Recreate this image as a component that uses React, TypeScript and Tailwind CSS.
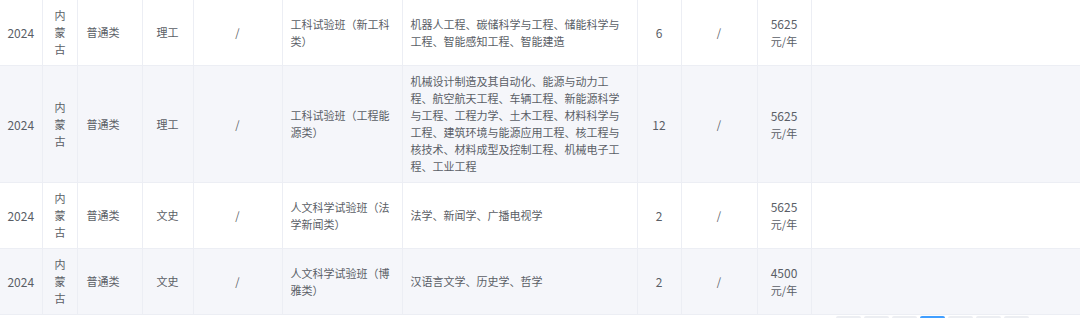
import React from "react";

type Row = {
  year: string;
  province: string;
  kind: string;
  subject: string;
  req: string;
  cls: string;
  majors: string;
  count: string;
  note: string;
  fee: string;
};

const rows: Row[] = [
  {
    year: "2024",
    province: "内蒙古",
    kind: "普通类",
    subject: "理工",
    req: "/",
    cls: "工科试验班（新工科类）",
    majors: "机器人工程、碳储科学与工程、储能科学与工程、智能感知工程、智能建造",
    count: "6",
    note: "/",
    fee: "5625",
  },
  {
    year: "2024",
    province: "内蒙古",
    kind: "普通类",
    subject: "理工",
    req: "/",
    cls: "工科试验班（工程能源类）",
    majors:
      "机械设计制造及其自动化、能源与动力工程、航空航天工程、车辆工程、新能源科学与工程、工程力学、土木工程、材料科学与工程、建筑环境与能源应用工程、核工程与核技术、材料成型及控制工程、机械电子工程、工业工程",
    count: "12",
    note: "/",
    fee: "5625",
  },
  {
    year: "2024",
    province: "内蒙古",
    kind: "普通类",
    subject: "文史",
    req: "/",
    cls: "人文科学试验班（法学新闻类）",
    majors: "法学、新闻学、广播电视学",
    count: "2",
    note: "/",
    fee: "5625",
  },
  {
    year: "2024",
    province: "内蒙古",
    kind: "普通类",
    subject: "文史",
    req: "/",
    cls: "人文科学试验班（博雅类）",
    majors: "汉语言文学、历史学、哲学",
    count: "2",
    note: "/",
    fee: "4500",
  },
];

const td = "border-r border-b border-[#eceef4] px-[8px] py-[7px] align-middle";

function App() {
  return (
    <div
      className="w-[1080px] bg-white text-[11px] leading-[17px] text-[#5a5e66]"
      style={{ fontFamily: '"Noto Sans CJK SC", "Noto Sans", sans-serif' }}
    >
      <table className="w-[1080px] table-fixed border-collapse">
        <colgroup>
          <col className="w-[42px]" />
          <col className="w-[35px]" />
          <col className="w-[65px]" />
          <col className="w-[51px]" />
          <col className="w-[89px]" />
          <col className="w-[120px]" />
          <col className="w-[235px]" />
          <col className="w-[44px]" />
          <col className="w-[76px]" />
          <col className="w-[54px]" />
          <col />
        </colgroup>
        <tbody>
          {rows.map((r, i) => (
            <tr key={i} className={i % 2 === 1 ? "bg-[#f5f6fa]" : "bg-white"}>
              <td className={td + " text-center !px-0 text-[12px]"}>{r.year}</td>
              <td className={td + " text-center !px-[12px]"}>{r.province}</td>
              <td className={td + " text-left !pl-[9px]"}>{r.kind}</td>
              <td className={td + " text-center"}>{r.subject}</td>
              <td className={td + " text-center"}>{r.req}</td>
              <td className={td + " text-left"}>{r.cls}</td>
              <td className={td + " text-left"}>{r.majors}</td>
              <td className={td + " text-center text-[12px]"}>{r.count}</td>
              <td className={td + " text-center"}>{r.note}</td>
              <td className={td + " text-center !px-[6px]"}>
                <span className="text-[12px]">{r.fee}</span>
                <br />
                元/年
              </td>
              <td className="border-b border-[#eceef4]"></td>
            </tr>
          ))}
        </tbody>
      </table>
      {/* pager, only its top edge is in view */}
      <div className="flex justify-end gap-[3px] pr-[51px] pt-[1px]">
        {[0, 1, 2, 3, 4, 5, 6].map((i) => (
          <span
            key={i}
            className={
              "block h-[28px] w-[25px] rounded-[2px] " +
              (i === 3 ? "bg-[#409eff]" : "bg-[#eceef2]")
            }
          />
        ))}
      </div>
    </div>
  );
}

export default App;
